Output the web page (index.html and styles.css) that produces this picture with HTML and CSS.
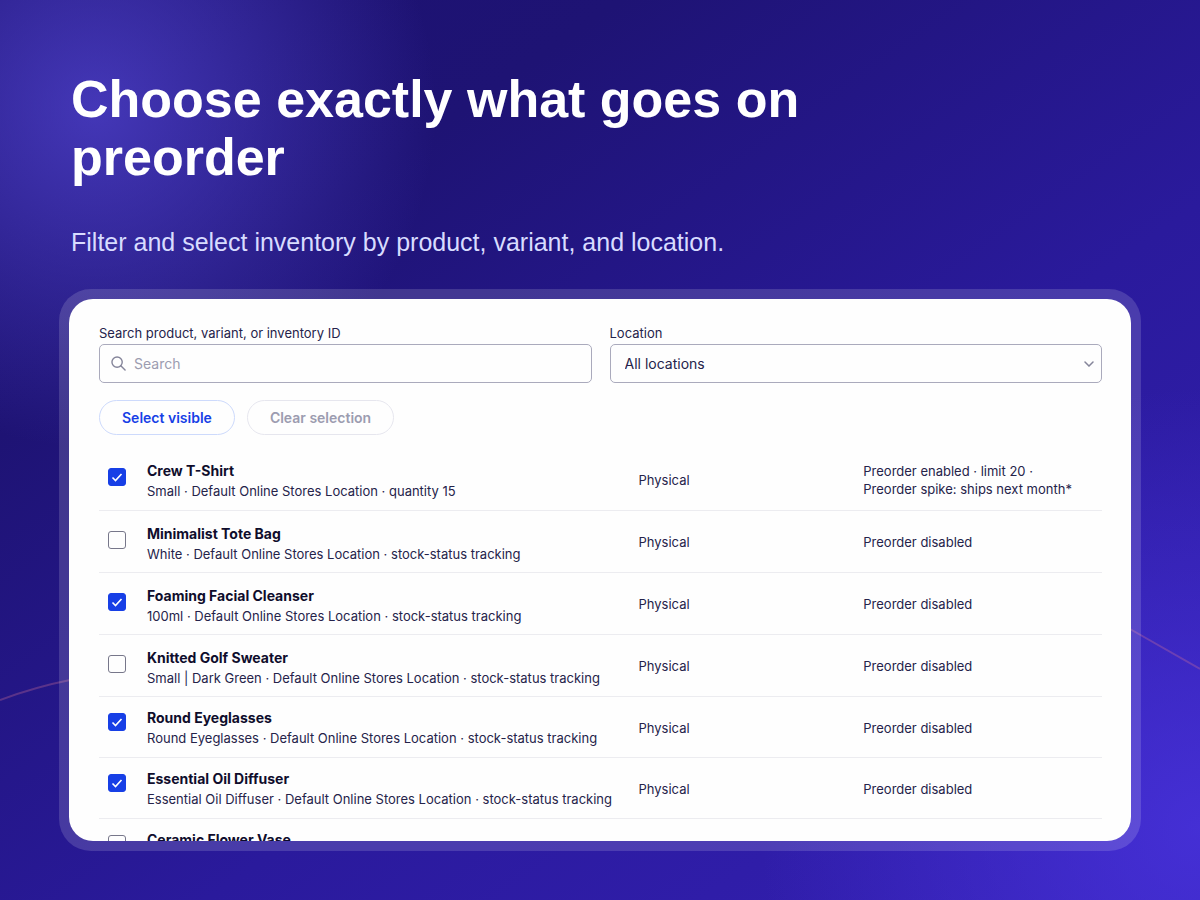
FILE: index.html
```html
<!DOCTYPE html>
<html lang="en">
<head>
    <meta charset="UTF-8">
    <meta name="viewport" content="width=device-width, initial-scale=1.0">
    <title>Choose exactly what goes on preorder</title>
    <link rel="stylesheet" href="styles.css">
</head>
<body>
    <svg class="backdrop-line" viewBox="0 0 1200 900" preserveAspectRatio="none" aria-hidden="true">
        <path d="M0 700 Q35 687 70 680 C330 628 520 720 740 640 C900 570 1040 575 1130 629 Q1165 649 1200 669" />
    </svg>
    <main class="slide">
        <header class="intro">
            <h1 class="intro-title">Choose exactly what goes on preorder</h1>
            <p class="intro-text">Filter and select inventory by product, variant, and location.</p>
        </header>

        <section class="frame">
            <div class="panel">
                <!-- Filters -->
                <div class="filters">
                    <div class="field">
                        <label for="search">Search product, variant, or inventory ID</label>
                        <div class="control">
                            <svg class="search-icon" viewBox="0 0 16 16" aria-hidden="true">
                                <circle cx="6.5" cy="6.5" r="5.5" />
                                <path d="M10.5 10.5 15 15" />
                            </svg>
                            <input type="text" id="search" placeholder="Search">
                        </div>
                    </div>
                    <div class="field">
                        <label for="location">Location</label>
                        <div class="control">
                            <select id="location">
                                <option>All locations</option>
                            </select>
                            <svg class="chevron" viewBox="0 0 10 6" aria-hidden="true">
                                <path d="M1 1l4 4 4-4" />
                            </svg>
                        </div>
                    </div>
                </div>

                <div class="actions">
                    <button type="button" class="btn btn-primary">Select visible</button>
                    <button type="button" class="btn" disabled>Clear selection</button>
                </div>

                <!-- Inventory -->
                <table class="inventory">
                    <tbody>
                        <tr>
                            <td class="check"><input type="checkbox" id="item-1" checked></td>
                            <td class="item"><label for="item-1">Crew T-Shirt</label><p>Small · Default Online Stores Location · quantity 15</p></td>
                            <td class="type">Physical</td>
                            <td class="status">Preorder enabled · limit 20 ·<br>Preorder spike: ships next month*</td>
                        </tr>
                        <tr>
                            <td class="check"><input type="checkbox" id="item-2"></td>
                            <td class="item"><label for="item-2">Minimalist Tote Bag</label><p>White · Default Online Stores Location · stock-status tracking</p></td>
                            <td class="type">Physical</td>
                            <td class="status">Preorder disabled</td>
                        </tr>
                        <tr>
                            <td class="check"><input type="checkbox" id="item-3" checked></td>
                            <td class="item"><label for="item-3">Foaming Facial Cleanser</label><p>100ml · Default Online Stores Location · stock-status tracking</p></td>
                            <td class="type">Physical</td>
                            <td class="status">Preorder disabled</td>
                        </tr>
                        <tr>
                            <td class="check"><input type="checkbox" id="item-4"></td>
                            <td class="item"><label for="item-4">Knitted Golf Sweater</label><p>Small | Dark Green · Default Online Stores Location · stock-status tracking</p></td>
                            <td class="type">Physical</td>
                            <td class="status">Preorder disabled</td>
                        </tr>
                    </tbody>
                    <tbody class="compact">
                        <tr>
                            <td class="check"><input type="checkbox" id="item-5" checked></td>
                            <td class="item"><label for="item-5">Round Eyeglasses</label><p>Round Eyeglasses · Default Online Stores Location · stock-status tracking</p></td>
                            <td class="type">Physical</td>
                            <td class="status">Preorder disabled</td>
                        </tr>
                        <tr>
                            <td class="check"><input type="checkbox" id="item-6" checked></td>
                            <td class="item"><label for="item-6">Essential Oil Diffuser</label><p>Essential Oil Diffuser · Default Online Stores Location · stock-status tracking</p></td>
                            <td class="type">Physical</td>
                            <td class="status">Preorder disabled</td>
                        </tr>
                        <tr>
                            <td class="check"><input type="checkbox" id="item-7"></td>
                            <td class="item"><label for="item-7">Ceramic Flower Vase</label></td>
                            <td class="type"></td>
                            <td class="status"></td>
                        </tr>
                    </tbody>
                </table>
            </div>
        </section>
    </main>
</body>
</html>
```
FILE: styles.css
```css
* {
    margin: 0;
    padding: 0;
    box-sizing: border-box;
}

body {
    position: relative;
    height: 100vh;
    overflow: hidden;
    font-family: "Liberation Sans", Arial, sans-serif;
    background:
        radial-gradient(circle at 8% 12%, rgba(94, 80, 230, 0.6), rgba(94, 80, 230, 0) 340px),
        radial-gradient(circle at 100% 92%, rgba(76, 54, 228, 0.7), rgba(76, 54, 228, 0) 440px),
        linear-gradient(145deg, #1c1170 0%, #1e1374 25%, #2a1a9c 60%, #3420b4 100%);
}

/* thin curve running behind the panel */
.backdrop-line {
    position: absolute;
    inset: 0;
    width: 100%;
    height: 100%;
    fill: none;
    stroke: rgba(220, 120, 150, 0.3);
    stroke-width: 2;
}

.slide {
    position: relative;
    display: flex;
    flex-direction: column;
    height: 100%;
    padding: 70px 59px 49px;
}

.intro {
    padding: 0 12px;
}

.intro-title {
    max-width: 800px;
    font-size: 52px;
    line-height: 58px;
    color: #fff;
}

.intro-text {
    margin-top: 40px;
    font-size: 25px;
    line-height: 32px;
    color: #d8dcff;
}

.frame {
    flex: 1;
    display: flex;
    min-height: 0;
    margin-top: 31px;
    padding: 10px;
    border-radius: 32px;
    background-color: rgba(255, 255, 255, 0.15);
}

.panel {
    flex: 1;
    padding: 25px 29px 0 30px;
    border-radius: 24px;
    background-color: #fefefe;
    color: #25234a;
    font-family: Inter, "Liberation Sans", sans-serif;
    font-size: 13px;
    line-height: 18px;
    overflow: hidden;
}

.filters {
    display: grid;
    grid-template-columns: 1fr 1fr;
    gap: 18px;
}

.field label {
    display: block;
    font-size: 13px;
}

.control {
    position: relative;
    margin-top: 2px;
}

.control input,
.control select {
    display: block;
    width: 100%;
    height: 39px;
    padding: 0 14px;
    border: 1px solid #aaaabc;
    border-radius: 5px;
    background-color: #fefefe;
    color: #25234a;
    font: inherit;
    font-size: 14px;
    appearance: none;
}

.control input {
    padding-left: 34px;
}

.control input::placeholder {
    color: #9c9cb0;
}

.search-icon,
.chevron {
    position: absolute;
    fill: none;
    stroke: #85859a;
    stroke-width: 1.5;
    stroke-linecap: round;
    pointer-events: none;
}

.search-icon {
    top: 12px;
    left: 12px;
    width: 15px;
    height: 15px;
}

.chevron {
    top: 17px;
    right: 8px;
    width: 10px;
    height: 6px;
}

.actions {
    display: flex;
    gap: 12px;
    margin-top: 17px;
}

.btn {
    height: 35px;
    padding: 0 22px;
    border: 1px solid #e6e6ee;
    border-radius: 18px;
    background-color: #fefefe;
    color: #9c9cb0;
    font: inherit;
    font-size: 14px;
    font-weight: 600;
}

.btn-primary {
    border-color: #cddafc;
    color: #173fe6;
}

.inventory {
    width: 100%;
    margin-top: 13px;
    border-collapse: collapse;
    table-layout: fixed;
}

.inventory td {
    height: 62px;
    padding-top: 2px;
    border-bottom: 1px solid #ececf0;
    vertical-align: middle;
}

.inventory .compact td {
    height: 61px;
}

.inventory .check {
    width: 48px;
    padding: 20px 0 0 9px;
    vertical-align: top;
}

.inventory .item {
    width: 49%;
    padding-top: 13px;
    vertical-align: top;
    white-space: nowrap;
}

.inventory .compact .check {
    padding-top: 16px;
}

.inventory .compact .item {
    padding-top: 11px;
}

.inventory .status {
    width: 24%;
    padding-left: 2px;
}

.item label {
    display: block;
    color: #0f0d2c;
    font-size: 14px;
    font-weight: 700;
    line-height: 20px;
}

.item p {
    line-height: 20px;
}

.check input {
    display: block;
    width: 18px;
    height: 18px;
    border: 1px solid #77778a;
    border-radius: 3px;
    background-color: #fefefe;
    appearance: none;
}

.check input:checked {
    border-color: #173fe6;
    background: #173fe6 url("data:image/svg+xml,%3Csvg xmlns='http://www.w3.org/2000/svg' viewBox='0 0 16 16'%3E%3Cpath d='M3.5 8.5l3 3 6-6.5' fill='none' stroke='white' stroke-width='1.6'/%3E%3C/svg%3E") center / 16px no-repeat;
}
```
